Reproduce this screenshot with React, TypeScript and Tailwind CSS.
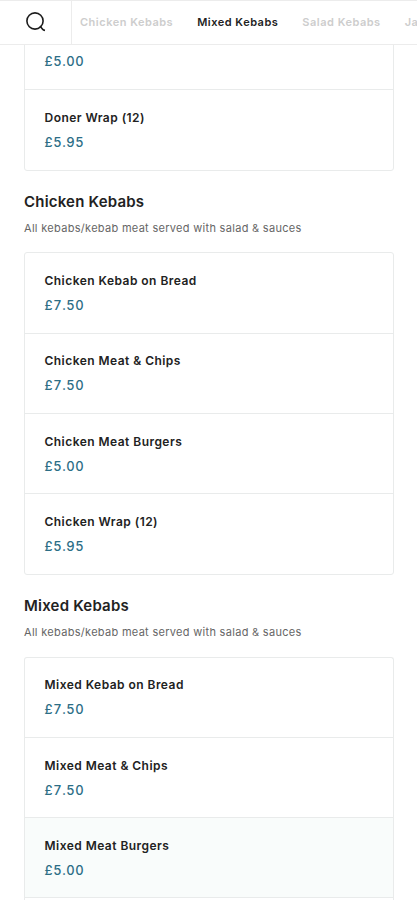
type MenuItem = { name?: string; price: string; highlighted?: boolean };

const doner: MenuItem[] = [
  { price: '£5.00' },
  { name: 'Doner Wrap (12)', price: '£5.95' },
];

const chicken: MenuItem[] = [
  { name: 'Chicken Kebab on Bread', price: '£7.50' },
  { name: 'Chicken Meat & Chips', price: '£7.50' },
  { name: 'Chicken Meat Burgers', price: '£5.00' },
  { name: 'Chicken Wrap (12)', price: '£5.95' },
];

const mixed: MenuItem[] = [
  { name: 'Mixed Kebab on Bread', price: '£7.50' },
  { name: 'Mixed Meat & Chips', price: '£7.50' },
  { name: 'Mixed Meat Burgers', price: '£5.00', highlighted: true },
];

function SearchIcon() {
  return (
    <svg width="20" height="20" viewBox="0 0 20 20" fill="none" stroke="#1c1c1c" strokeWidth="1.6">
      <circle cx="9" cy="9" r="8.1" />
      <path d="M14 14L16.6 17.2Q17.3 18.2 19 18.4" />
    </svg>
  );
}

// `open` lists carry on past the bottom of the screen
function MenuList({ items, open = false }: { items: MenuItem[]; open?: boolean }) {
  return (
    <ul
      className={`mr-[23px] ml-6 border-x border-t border-[#e9ebeb] ${open ? 'rounded-t-[3px] pb-20' : 'rounded-[3px] border-b'}`}
    >
      {items.map((item, i) => (
        <li
          key={i}
          className={`flex h-[80.25px] flex-col justify-end border-[#e9ebeb] pl-[19.5px] ${open || i < items.length - 1 ? 'border-b pb-[18.5px]' : 'pb-[19.5px]'} ${item.highlighted ? 'bg-[#f9fcfb]' : ''}`}
        >
          {item.name && (
            <h3 className="text-[12px] leading-[18px] font-semibold tracking-[0.46px] text-[#222]">{item.name}</h3>
          )}
          <p className="mt-[6px] text-[13px] leading-[18px] font-medium tracking-[0.6px] text-[#2c6e86] tabular-nums">
            {item.price}
          </p>
        </li>
      ))}
    </ul>
  );
}

function SectionHeading({ title }: { title: string }) {
  return (
    <div className="h-[81.25px] px-6 pt-[19.5px]">
      <h2 className="text-[15px] leading-[22px] font-semibold tracking-[0.2px] text-[#222]">{title}</h2>
      <p className="mt-[7px] text-[11px] leading-4 tracking-[0.3px] text-[#666]">
        All kebabs/kebab meat served with salad &amp; sauces
      </p>
    </div>
  );
}

export default function App() {
  return (
    <div className="flex h-[900px] w-[417px] flex-col overflow-hidden bg-white font-['Inter',sans-serif]">
      <header className="flex h-[45px] shrink-0 border-t border-b border-[#ececec]">
        <div className="flex w-[72px] shrink-0 items-center justify-center border-r border-[#ececec] pb-px">
          <SearchIcon />
        </div>
        <nav className="flex items-center gap-6 overflow-hidden pl-2 text-[11px] font-semibold tracking-[0.5px] whitespace-nowrap text-[#cdcdcd]">
          <span>Chicken Kebabs</span>
          <span className="text-[#222]">Mixed Kebabs</span>
          <span>Salad Kebabs</span>
          <span>Ja</span>
        </nav>
      </header>
      <main className="min-h-0 grow overflow-hidden">
        <div className="-mt-[36.5px]">
          <MenuList items={doner} />
          <SectionHeading title="Chicken Kebabs" />
          <MenuList items={chicken} />
          <SectionHeading title="Mixed Kebabs" />
          <MenuList items={mixed} open />
        </div>
      </main>
    </div>
  );
}
